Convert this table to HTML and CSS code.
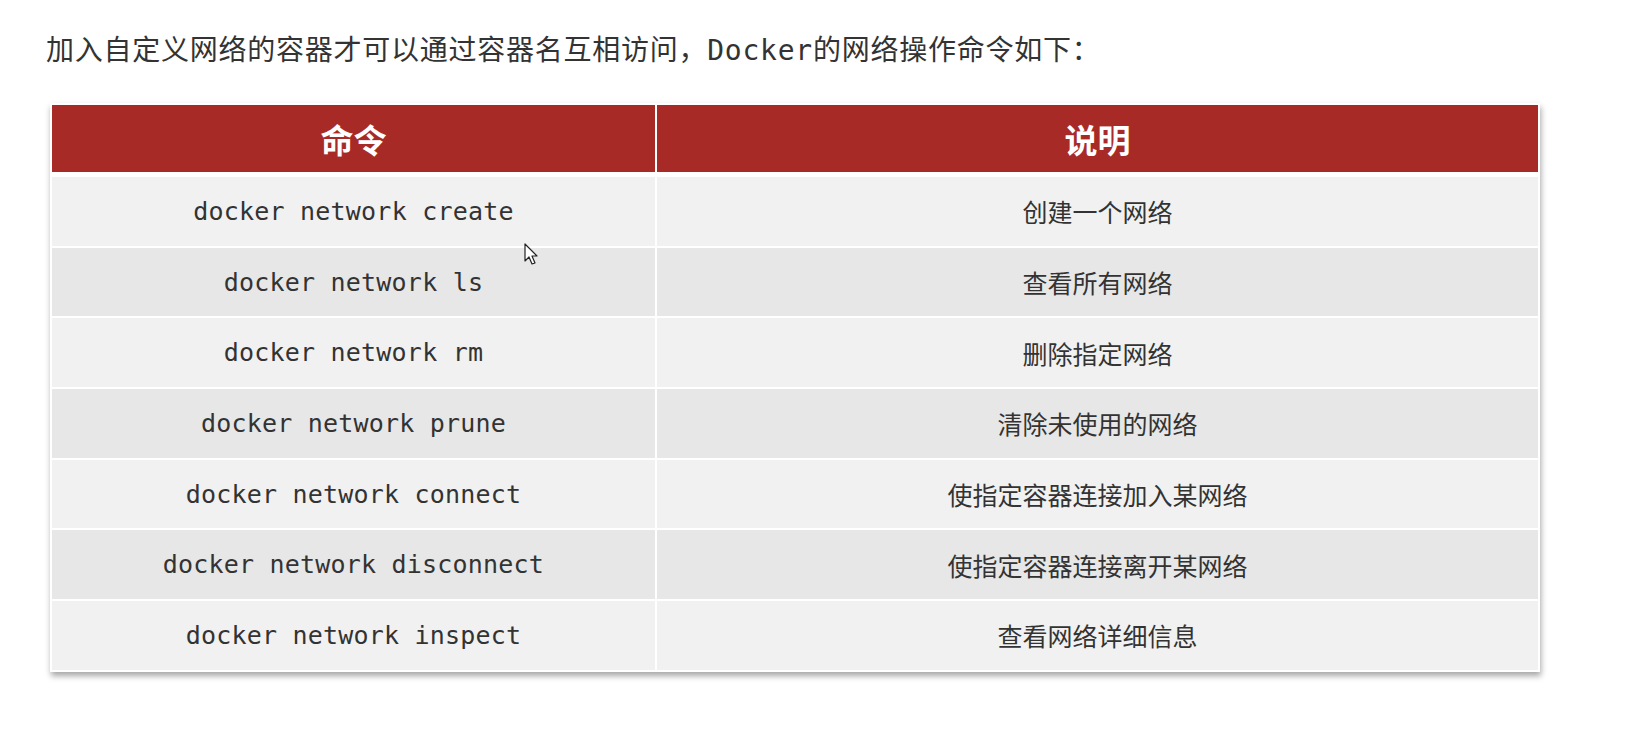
FILE: index.html
```html
<!DOCTYPE html>
<html lang="zh-CN">
<head>
<meta charset="utf-8">
<title>Docker网络操作命令</title>
<link rel="stylesheet" href="styles.css">
</head>
<body>
<p class="intro">加入自定义网络的容器才可以通过容器名互相访问，Docker的网络操作命令如下：</p>
<table class="cmd-table">
  <thead>
    <tr><th class="col-cmd">命令</th><th class="col-desc">说明</th></tr>
  </thead>
  <tbody>
    <tr><td class="code">docker network create</td><td>创建一个网络</td></tr>
    <tr><td class="code">docker network ls</td><td>查看所有网络</td></tr>
    <tr><td class="code">docker network rm</td><td>删除指定网络</td></tr>
    <tr><td class="code">docker network prune</td><td>清除未使用的网络</td></tr>
    <tr><td class="code">docker network connect</td><td>使指定容器连接加入某网络</td></tr>
    <tr><td class="code">docker network disconnect</td><td>使指定容器连接离开某网络</td></tr>
    <tr><td class="code">docker network inspect</td><td>查看网络详细信息</td></tr>
  </tbody>
</table>
<svg class="cursor" width="16" height="24" viewBox="0 0 16 24" aria-hidden="true">
  <path d="M1 1 L1 18 L5 14 L8 21 L11 20 L8 13 L13 13 Z" fill="#fff" stroke="#222" stroke-width="1.2" stroke-linejoin="round"/>
</svg>
</body>
</html>
```
FILE: styles.css
```css
html, body {
  margin: 0;
  padding: 0;
  background: #ffffff;
}
body {
  position: relative;
  width: 1635px;
  height: 749px;
  overflow: hidden;
  font-family: "Noto Sans CJK SC", "DejaVu Sans", sans-serif;
  color: #333333;
}
.intro {
  margin: 0;
  padding: 31px 0 0 46px;
  height: 40px;
  line-height: 40px;
  font-family: "DejaVu Sans Mono", "Noto Sans CJK SC", monospace;
  font-size: 28px;
  letter-spacing: 0.75px;
  color: #333333;
}
.cmd-table {
  margin: 32px 0 0 50px;
  width: 1490px;
  border-collapse: separate;
  border-spacing: 2px;
  background: #ffffff;
  box-shadow: 1px 4px 6px rgba(0, 0, 0, 0.35);
  table-layout: fixed;
}
.cmd-table th {
  height: 67px;
  padding: 0;
  background: #a82a27;
  color: #ffffff;
  font-family: "Noto Sans CJK SC", sans-serif;
  font-weight: 700;
  font-size: 33px;
  text-align: center;
  vertical-align: middle;
  border-bottom: 3px solid #ffffff;
}
.col-cmd { width: 603px; }
.cmd-table td {
  height: 68.7px;
  padding: 0;
  text-align: center;
  vertical-align: middle;
  font-family: "Noto Sans CJK SC", sans-serif;
  font-size: 25px;
  color: #333333;
  background: #f1f1f1;
}
.cmd-table tbody tr:nth-child(even) td {
  background: #e7e7e7;
}
.cmd-table td.code {
  font-family: "DejaVu Sans Mono", "Liberation Mono", monospace;
  font-size: 25px;
  letter-spacing: 0.2px;
}
.cursor {
  position: absolute;
  left: 524px;
  top: 243px;
}
```
